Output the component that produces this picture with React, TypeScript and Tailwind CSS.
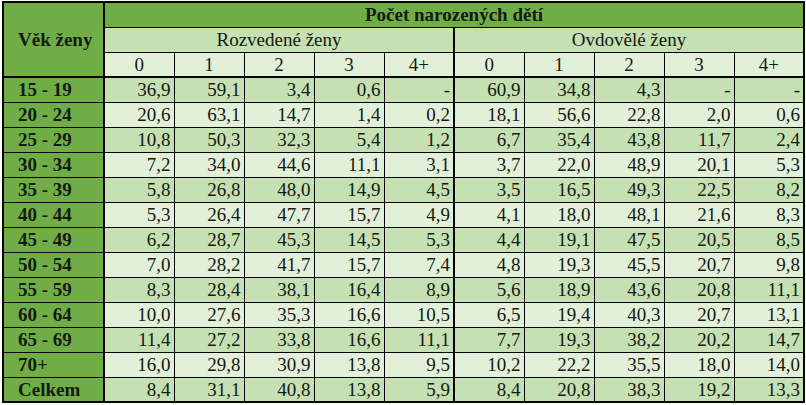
const rows: [string, string[]][] = [
  ["15 - 19", ["36,9", "59,1", "3,4", "0,6", "-", "60,9", "34,8", "4,3", "-", "-"]],
  ["20 - 24", ["20,6", "63,1", "14,7", "1,4", "0,2", "18,1", "56,6", "22,8", "2,0", "0,6"]],
  ["25 - 29", ["10,8", "50,3", "32,3", "5,4", "1,2", "6,7", "35,4", "43,8", "11,7", "2,4"]],
  ["30 - 34", ["7,2", "34,0", "44,6", "11,1", "3,1", "3,7", "22,0", "48,9", "20,1", "5,3"]],
  ["35 - 39", ["5,8", "26,8", "48,0", "14,9", "4,5", "3,5", "16,5", "49,3", "22,5", "8,2"]],
  ["40 - 44", ["5,3", "26,4", "47,7", "15,7", "4,9", "4,1", "18,0", "48,1", "21,6", "8,3"]],
  ["45 - 49", ["6,2", "28,7", "45,3", "14,5", "5,3", "4,4", "19,1", "47,5", "20,5", "8,5"]],
  ["50 - 54", ["7,0", "28,2", "41,7", "15,7", "7,4", "4,8", "19,3", "45,5", "20,7", "9,8"]],
  ["55 - 59", ["8,3", "28,4", "38,1", "16,4", "8,9", "5,6", "18,9", "43,6", "20,8", "11,1"]],
  ["60 - 64", ["10,0", "27,6", "35,3", "16,6", "10,5", "6,5", "19,4", "40,3", "20,7", "13,1"]],
  ["65 - 69", ["11,4", "27,2", "33,8", "16,6", "11,1", "7,7", "19,3", "38,2", "20,2", "14,7"]],
  ["70+", ["16,0", "29,8", "30,9", "13,8", "9,5", "10,2", "22,2", "35,5", "18,0", "14,0"]],
  ["Celkem", ["8,4", "31,1", "40,8", "13,8", "5,9", "8,4", "20,8", "38,3", "19,2", "13,3"]],
];

const counts = ["0", "1", "2", "3", "4+"];

export default function App() {
  return (
    <div className="w-[806px] h-[405px] bg-white pl-[2px] pt-[1px] font-['Liberation_Serif','Times_New_Roman',serif]">
      <table className="table-fixed border-collapse border-2 border-black text-[19px] leading-none text-[#151a12]">
        <colgroup>
          <col className="w-[101px]" />
          {Array.from({ length: 10 }).map((_, i) => (
            <col key={i} className="w-[70px]" />
          ))}
        </colgroup>
        <thead>
          <tr className="h-[25px]">
            <th
              rowSpan={3}
              className="bg-[#70AD47] border-r-2 border-b-2 border-black text-left pl-[14px] font-bold"
            >
              Věk ženy
            </th>
            <th colSpan={10} className="bg-[#70AD47] border border-black font-bold text-center">
              Počet narozených dětí
            </th>
          </tr>
          <tr className="h-[25px]">
            <th colSpan={5} className="bg-[#C5E0B3] border border-black border-r-2 font-normal text-center">
              Rozvedené ženy
            </th>
            <th colSpan={5} className="bg-[#C5E0B3] border border-black font-normal text-center">
              Ovdovělé ženy
            </th>
          </tr>
          <tr className="h-[25px]">
            {[...counts, ...counts].map((c, i) => (
              <th
                key={i}
                className={`bg-[#E2EFD9] border border-black border-b-2 font-normal text-center ${i === 4 ? "border-r-2" : ""}`}
              >
                {c}
              </th>
            ))}
          </tr>
        </thead>
        <tbody>
          {rows.map(([label, vals], r) => (
            <tr key={label} className={`h-[25px] ${r % 2 === 0 ? "bg-[#C5E0B3]" : "bg-[#E2EFD9]"}`}>
              <td className="bg-[#70AD47] border-r-2 border-b border-black pl-[14px] font-bold">
                {label}
              </td>
              {vals.map((v, i) => (
                <td
                  key={i}
                  className={`border border-black text-right pr-[3px] ${i === 4 ? "border-r-2" : ""}`}
                >
                  {v}
                </td>
              ))}
            </tr>
          ))}
        </tbody>
      </table>
    </div>
  );
}
